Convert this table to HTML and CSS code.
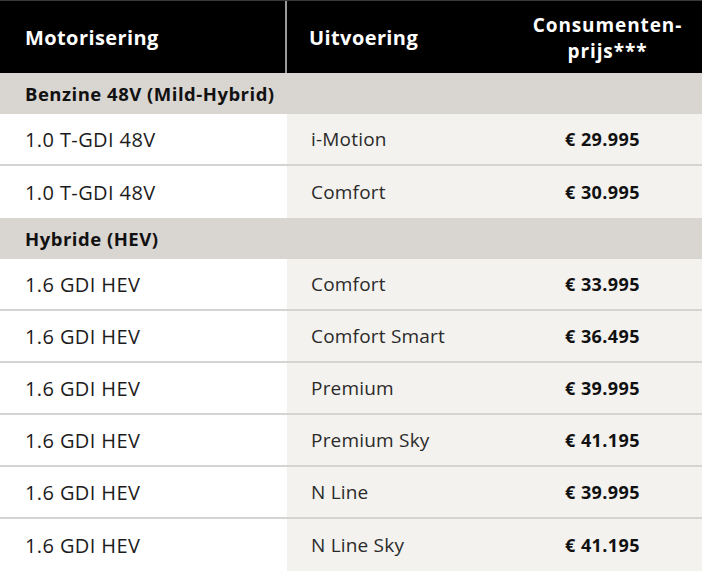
FILE: index.html
```html
<!DOCTYPE html>
<html lang="nl">
<head>
<meta charset="utf-8">
<link rel="stylesheet" href="styles.css">
</head>
<body>
<div class="table">
  <div class="row head">
    <div class="cell c1">Motorisering</div>
    <div class="cell c2">Uitvoering</div>
    <div class="cell c3"><span class="hl">Consumenten-</span><span class="hl">prijs***</span></div>
  </div>
  <div class="row section"><div class="cell">Benzine 48V (Mild-Hybrid)</div></div>
  <div class="row data"><div class="cell c1">1.0 T-GDI 48V</div><div class="cell c2">i-Motion</div><div class="cell c3">€ 29.995</div></div>
  <div class="row data last"><div class="cell c1">1.0 T-GDI 48V</div><div class="cell c2">Comfort</div><div class="cell c3">€ 30.995</div></div>
  <div class="row section"><div class="cell">Hybride (HEV)</div></div>
  <div class="row data"><div class="cell c1">1.6 GDI HEV</div><div class="cell c2">Comfort</div><div class="cell c3">€ 33.995</div></div>
  <div class="row data"><div class="cell c1">1.6 GDI HEV</div><div class="cell c2">Comfort Smart</div><div class="cell c3">€ 36.495</div></div>
  <div class="row data"><div class="cell c1">1.6 GDI HEV</div><div class="cell c2">Premium</div><div class="cell c3">€ 39.995</div></div>
  <div class="row data"><div class="cell c1">1.6 GDI HEV</div><div class="cell c2">Premium Sky</div><div class="cell c3">€ 41.195</div></div>
  <div class="row data"><div class="cell c1">1.6 GDI HEV</div><div class="cell c2">N Line</div><div class="cell c3">€ 39.995</div></div>
  <div class="row data last"><div class="cell c1">1.6 GDI HEV</div><div class="cell c2">N Line Sky</div><div class="cell c3">€ 41.195</div></div>
</div>
</body>
</html>
```
FILE: styles.css
```css
html, body {
  margin: 0;
  padding: 0;
  background: #ffffff;
}
.table {
  width: 702px;
  font-family: "Open Sans", "Liberation Sans", sans-serif;
  color: #1e1e1e;
}
.row {
  display: grid;
  grid-template-columns: 287px 228px 1fr;
}
.cell {
  display: flex;
  align-items: center;
  padding-left: 24px;
}
.head {
  height: 73px;
  background: #000;
  color: #fff;
  font-weight: 700;
  font-size: 20px;
  letter-spacing: 0.4px;
  border-top: 1px solid #3a3a3a;
  box-sizing: border-box;
}
.head .c1 {
  border-right: 2px solid #9a9a9a;
  padding-left: 25px;
}
.head .c2 {
  padding-left: 22px;
}
.head .c3 {
  flex-direction: column;
  justify-content: center;
  align-items: center;
  padding-left: 0;
  padding-right: 2px;
  padding-top: 2px;
  letter-spacing: 0.9px;
}
.hl {
  display: block;
  height: 26px;
  line-height: 26px;
  font-size: 19px;
}
.section {
  height: 41px;
  background: #d9d5d1;
  display: flex;
  font-weight: 700;
  font-size: 18.5px;
  letter-spacing: 0.5px;
  color: #111;
}
.section .cell {
  padding-left: 25px;
}
.data {
  height: 52px;
  font-size: 19px;
  border-bottom: 2px solid #d6d4d2;
  box-sizing: border-box;
}
.data.last {
  border-bottom: none;
}
.data .c1 {
  background: #fff;
  padding-left: 25px;
  color: #1c1c1c;
  font-weight: 500;
  font-size: 20px;
  letter-spacing: 0.4px;
}
.data .c2 {
  background: #f4f2ef;
  color: #2a2a2a;
  font-size: 19px;
  letter-spacing: 0.2px;
}
.data .c3 {
  background: #f4f2ef;
  justify-content: center;
  padding-left: 0;
  padding-right: 12px;
  font-weight: 700;
  font-size: 18px;
  letter-spacing: 0.4px;
  color: #111;
}
```
